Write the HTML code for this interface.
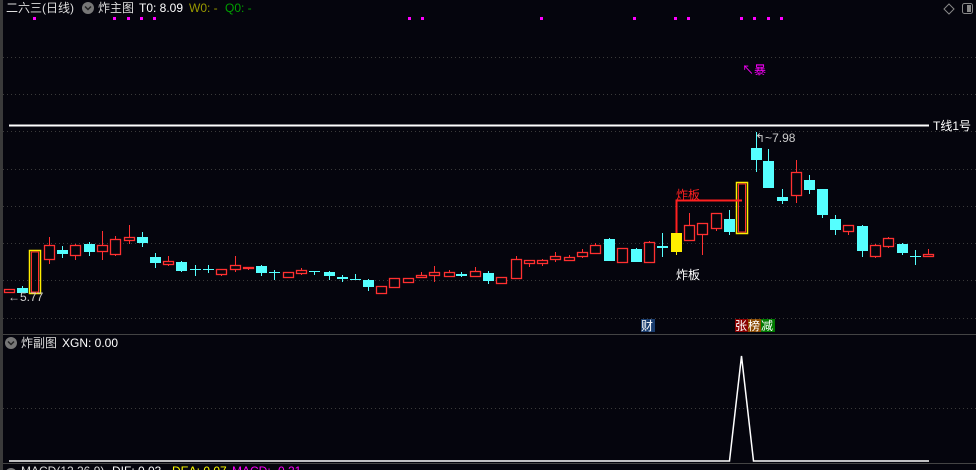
<!DOCTYPE html>
<html><head><meta charset="utf-8"><style>
html,body{margin:0;padding:0;background:#05050d;width:976px;height:470px;overflow:hidden}
svg{display:block}
text{font-family:"Liberation Sans","Noto Sans CJK SC",sans-serif;font-size:12px}
</style></head><body>
<svg id="s" width="976" height="470" xmlns="http://www.w3.org/2000/svg">
<rect width="976" height="470" fill="#05050d"/>
<rect x="0" y="0" width="3" height="470" fill="#3a3a3a"/>
<g stroke="#3a3a3a" stroke-dasharray="1 3" stroke-width="1">
<line x1="3" y1="57.5" x2="976" y2="57.5"/><line x1="3" y1="94.5" x2="976" y2="94.5"/>
<line x1="3" y1="131.5" x2="976" y2="131.5"/><line x1="3" y1="169.5" x2="976" y2="169.5"/>
<line x1="3" y1="206.5" x2="976" y2="206.5"/><line x1="3" y1="243.5" x2="976" y2="243.5"/>
<line x1="3" y1="280.5" x2="976" y2="280.5"/><line x1="3" y1="318.5" x2="976" y2="318.5"/>
<line x1="3" y1="408.5" x2="976" y2="408.5"/>
</g>
<line x1="3" y1="334.5" x2="976" y2="334.5" stroke="#444" />
<line x1="3" y1="463.5" x2="976" y2="463.5" stroke="#444" />
<line x1="9" y1="125.5" x2="929" y2="125.5" stroke="#fff" stroke-width="2"/>
<text x="933" y="130" fill="#fff">T线1号</text>
<text x="6" y="12" fill="#ddd">二六三(日线)</text>
<circle cx="88" cy="8" r="6" fill="#777"/><path d="M85 6.5l3 3 3-3" stroke="#222" stroke-width="1.5" fill="none"/>
<text x="98" y="12" fill="#ddd">炸主图</text>
<text x="139" y="12" fill="#fff">T0: 8.09</text>
<text x="189" y="12" fill="#999900">W0: -</text>
<text x="225" y="12" fill="#00a000">Q0: -</text>
<path d="M949 4l5 5-5 5-5-5z" stroke="#888" fill="none"/>
<rect x="962.5" y="3.5" width="10" height="10" rx="2" stroke="#888" fill="none"/><rect x="967" y="5" width="4" height="7" fill="#888"/>
<g id="dots" fill="#ff00ff"></g>
<text x="742" y="74" fill="#ff00ff">↖暴</text>
<g id="c"></g>
<path d="M676.5 233V200.5H742" stroke="#ff2020" stroke-width="2" fill="none"/>
<text x="676" y="199" fill="#ff2020">炸板</text>
<text x="676" y="279" fill="#fff">炸板</text>
<text x="8" y="301" fill="#ccc">←5.77</text>
<text x="755" y="142" fill="#ccc">↰~7.98</text>
<rect x="641" y="319" width="14" height="13" fill="#1a3d6e"/><text x="641" y="330" fill="#fff">财</text>
<rect x="735" y="319" width="13" height="13" fill="#8a0000"/><text x="735" y="330" fill="#fff">张</text>
<rect x="748" y="319" width="13" height="13" fill="#8a4a00"/><text x="748" y="330" fill="#fff">榜</text>
<rect x="761" y="319" width="14" height="13" fill="#007a00"/><text x="761" y="330" fill="#fff">减</text>
<circle cx="11" cy="343" r="6" fill="#777"/><path d="M8 341.5l3 3 3-3" stroke="#222" stroke-width="1.5" fill="none"/>
<text x="21" y="347" fill="#ddd">炸副图</text><text x="62" y="347" fill="#fff">XGN: 0.00</text>
<path d="M9 461H729.5L741.5 356L753.5 461H929" stroke="#fff" stroke-width="1.5" fill="none"/>
<circle cx="11" cy="474" r="6" fill="#777"/>
<text x="21" y="475" fill="#ddd">MACD(12,26,9)</text><text x="112" y="475" fill="#fff">DIF: 0.03</text>
<text x="172" y="475" fill="#ff0">DEA: 0.07</text><text x="232" y="475" fill="#f0f">MACD: -0.21</text>
</svg>
<script>
var NS="http://www.w3.org/2000/svg";
function el(p,t,a){var e=document.createElementNS(NS,t);for(var k in a)e.setAttribute(k,a[k]);p.appendChild(e);return e;}
var d=document.getElementById('dots');
[34,114,128,141,154,409,422,541,634,675,688,741,754,768,781].forEach(function(x){el(d,'rect',{x:x-1,y:17,width:3,height:3});});
var C=[[9,289,292,289,292,'r'],[22,288,293,286,293,'c'],[35,250,293,250,293,'Y'],[49,245,259,237,264,'r'],[62,250,254,246,258,'c'],[75,245,255,244,260,'r'],[89,244,252,242,256,'c'],[102,245,251,231,260,'r'],[115,239,254,236,256,'r'],[129,237,240,225,244,'r'],[142,237,243,232,247,'c'],[155,257,263,253,268,'c'],[168,261,264,256,266,'r'],[181,262,271,261,272,'c'],[195,269,269,265,276,'x'],[208,269,269,265,273,'x'],[221,269,274,269,276,'r'],[235,265,269,256,272,'r'],[248,267,268,267,270,'r'],[261,266,273,265,276,'c'],[274,272,272,270,280,'x'],[288,272,277,272,277,'r'],[301,270,273,268,275,'r'],[314,271,271,271,275,'x'],[329,272,276,271,280,'c'],[342,277,279,275,282,'c'],[355,279,279,274,280,'x'],[368,280,287,279,291,'c'],[381,286,293,286,294,'r'],[394,278,287,278,287,'r'],[408,278,282,278,283,'r'],[421,275,277,272,277,'r'],[434,272,275,266,282,'r'],[449,272,276,270,277,'r'],[461,274,275,272,277,'c'],[475,271,276,267,277,'r'],[488,273,281,271,284,'c'],[501,277,283,277,283,'r'],[516,259,278,256,278,'r'],[529,260,263,260,267,'r'],[542,260,263,259,266,'r'],[555,256,259,252,262,'r'],[569,257,260,255,261,'r'],[582,252,256,249,258,'r'],[595,245,253,243,253,'r'],[609,239,261,238,261,'c'],[622,248,262,248,263,'r'],[636,249,262,248,262,'c'],[649,242,262,241,262,'r'],[662,246,248,233,257,'c'],[676,233,252,233,255,'y'],[689,225,240,213,240,'r'],[702,223,234,223,255,'r'],[716,213,228,213,231,'r'],[729,219,232,210,235,'c'],[742,182,233,182,233,'Y'],[756,148,160,132,172,'c'],[768,161,188,149,188,'c'],[782,197,201,189,204,'c'],[796,172,195,160,203,'r'],[809,180,190,175,194,'c'],[822,189,215,189,218,'c'],[835,219,230,215,235,'c'],[848,225,231,225,235,'r'],[862,226,251,225,257,'c'],[875,245,256,244,258,'r'],[888,238,246,237,248,'r'],[902,244,253,243,255,'c'],[915,256,256,250,265,'x'],[928,254,256,249,256,'r']];
var g=document.getElementById('c');
C.forEach(function(c){var x=c[0],t=c[1],b=c[2],wt=c[3],wb=c[4],k=c[5];
 var col=(k=='r')?'#ff3030':(k=='y'?'#ffee00':(k=='Y'?'#ff3030':'#55ffff'));
 if(k=='Y'){el(g,'rect',{x:x-5.5,y:t+.5,width:11,height:b-t,fill:'none',stroke:'#ffee00','stroke-width':1.5});el(g,'rect',{x:x-3.5,y:t+2,width:7,height:b-t-3,fill:'none',stroke:'#ff3030'});return;}
 el(g,'line',{x1:x+.5,y1:wt,x2:x+.5,y2:wb,stroke:col});
 if(k=='x'){el(g,'line',{x1:x-5,y1:t+.5,x2:x+6,y2:t+.5,stroke:col});return;}
 if(k=='r'){el(g,'rect',{x:x-4.5,y:t+.5,width:10,height:Math.max(b-t,1),fill:'#05050d',stroke:col,'stroke-width':1.3});}
 else el(g,'rect',{x:x-5,y:t,width:11,height:Math.max(b-t,2),fill:col});
});
</script>
</body></html>
